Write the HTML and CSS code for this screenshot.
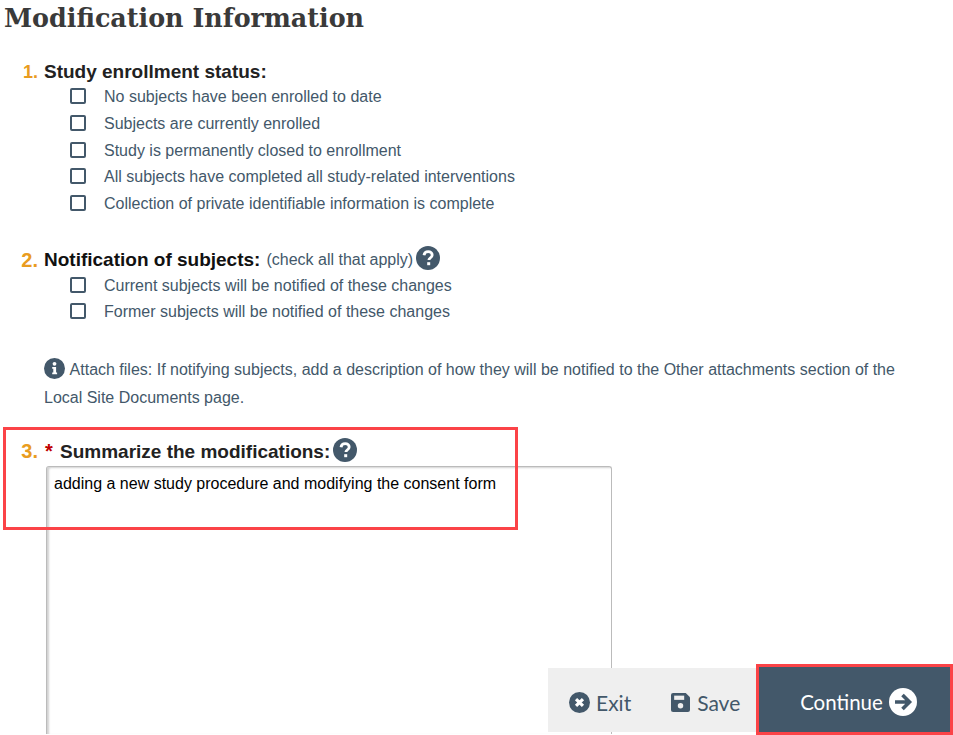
FILE: index.html
```html
<!DOCTYPE html>
<html>
<head>
    <title>Modification Information</title>
    <link rel="stylesheet" href="styles.css">
</head>
<body>
    <main class="page">
        <h1>Modification Information</h1>

        <section class="question q-status">
            <div class="question-title"><span class="num">1.</span><strong>Study enrollment status:</strong></div>
            <label class="option"><input type="checkbox"><span>No subjects have been enrolled to date</span></label>
            <label class="option"><input type="checkbox"><span>Subjects are currently enrolled</span></label>
            <label class="option"><input type="checkbox"><span>Study is permanently closed to enrollment</span></label>
            <label class="option"><input type="checkbox"><span>All subjects have completed all study-related interventions</span></label>
            <label class="option"><input type="checkbox"><span>Collection of private identifiable information is complete</span></label>
        </section>

        <section class="question q-notify">
            <div class="question-title">
                <span class="num">2.</span><strong>Notification of subjects:</strong>
                <span class="hint">(check all that apply)</span>
                <svg class="help-icon" viewBox="0 0 24 24"><circle cx="12" cy="12" r="12" fill="#43586a"/><path d="M8 9.200c.3-2.300 2-3.600 4.200-3.600 2.300 0 4 1.400 4 3.400 0 1.700-1 2.400-2.100 3.100-.9.6-1.200 1-1.200 2" fill="none" stroke="#fff" stroke-width="2.800"/><rect x="11.200" y="16.200" width="3" height="3" fill="#fff"/></svg>
            </div>
            <label class="option"><input type="checkbox"><span>Current subjects will be notified of these changes</span></label>
            <label class="option"><input type="checkbox"><span>Former subjects will be notified of these changes</span></label>
        </section>

        <p class="attach-note">
            <svg class="info-icon" viewBox="0 0 21 21"><circle cx="10.500" cy="10.500" r="10.500" fill="#43586a"/><circle cx="10.500" cy="5.800" r="1.900" fill="#fff"/><path d="M8.200 9h3.900v5.600h1v1.700H8.200v-1.700h1.100v-3.900H8.200z" fill="#fff"/></svg>
            Attach files: If notifying subjects, add a description of how they will be notified to the Other attachments section of the Local Site Documents page.
        </p>

        <section class="question q-summary">
            <div class="question-title">
                <span class="num">3.</span><span class="required">*</span><strong>Summarize the modifications:</strong>
                <svg class="help-icon" viewBox="0 0 24 24"><circle cx="12" cy="12" r="12" fill="#43586a"/><path d="M8 9.200c.3-2.300 2-3.600 4.200-3.600 2.300 0 4 1.400 4 3.400 0 1.700-1 2.400-2.100 3.100-.9.6-1.200 1-1.200 2" fill="none" stroke="#fff" stroke-width="2.800"/><rect x="11.200" y="16.200" width="3" height="3" fill="#fff"/></svg>
            </div>
            <textarea class="summary-box">adding a new study procedure and modifying the consent form</textarea>
        </section>
    </main>

    <div class="highlight highlight-summary"></div>

    <div class="action-bar">
        <button class="btn btn-plain">
            <svg class="btn-icon" viewBox="0 0 20 20"><circle cx="10" cy="10" r="10" fill="#43586a"/><path d="M6.700 6.700l6.600 6.600M13.300 6.700l-6.600 6.600" stroke="#fff" stroke-width="3"/></svg>
            Exit
        </button>
        <button class="btn btn-plain">
            <svg class="btn-icon btn-icon-save" viewBox="0 0 18 18"><path d="M2 0h12l4 4v12a2 2 0 0 1-2 2H2a2 2 0 0 1-2-2V2a2 2 0 0 1 2-2z" fill="#43586a"/><rect x="3" y="2.500" width="9.500" height="4" fill="#efefef"/><circle cx="9" cy="12" r="2.600" fill="#efefef"/></svg>
            Save
        </button>
        <button class="btn btn-continue">
            Continue
            <svg class="btn-icon-next" viewBox="0 0 28 28"><circle cx="14" cy="14" r="14" fill="#fff"/><path d="M6 14h14M13.500 7l7 7-7 7" fill="none" stroke="#43586a" stroke-width="3.600"/></svg>
        </button>
    </div>
</body>
</html>
```

FILE: styles.css
```css
html, body {
    margin: 0;
    height: 735px;
    overflow: hidden;
    background-color: #ffffff;
}
body {
    font-family: "Liberation Sans", Arial, sans-serif;
    font-size: 16px;
    color: #43586a;
}
.page {
    padding-left: 4px;
}
h1 {
    margin: 0;
    padding-top: 1px;
    font-family: "DejaVu Serif", serif;
    font-size: 25.4px;
    line-height: 35px;
    font-weight: bold;
    color: #3a3a3a;
}
.question-title {
    display: flex;
    align-items: center;
    height: 24px;
    color: #222222;
    font-size: 19px;
}
.num {
    width: 34px;
    margin-right: 6px;
    text-align: right;
    font-size: 20px;
    font-weight: bold;
    color: #e99c20;
}
.q-status {
    margin-top: 24px;
}
.q-status .num {
    font-size: 18px;
}
.q-notify {
    margin-top: 31px;
}
.q-notify strong {
    color: #111111;
}
.hint {
    margin-left: 6px;
    font-size: 16px;
    color: #43586a;
}
.help-icon {
    width: 24px;
    height: 24px;
    margin-left: 3px;
    margin-top: -4px;
}
.option {
    display: flex;
    align-items: center;
    height: 26.7px;
    padding-left: 66px;
}
.option input {
    appearance: none;
    width: 16px;
    height: 16px;
    margin: -2px 18px 0 0;
    background-color: #ffffff;
    border: 2px solid #43586a;
    border-radius: 2px;
    box-sizing: border-box;
}
.attach-note {
    margin: 30px 40px 0 40px;
    line-height: 28px;
}
.info-icon {
    width: 21px;
    height: 21px;
    margin-right: 1px;
    vertical-align: -4px;
}
.q-summary {
    margin-top: 28px;
}
.required {
    width: 15px;
    margin-left: 1px;
    font-size: 20px;
    font-weight: bold;
    color: #c00000;
}
.summary-box {
    display: block;
    width: 566px;
    height: 268px;
    margin: 2px 0 0 42px;
    padding: 8px 7px;
    box-sizing: border-box;
    font-family: "Liberation Sans", Arial, sans-serif;
    font-size: 16px;
    color: #000000;
    border: 1px solid #bbbbbb;
    border-bottom: none;
    border-radius: 3px 3px 0 0;
    box-shadow: inset 2px 1px 2px rgba(0, 0, 0, 0.18);
    resize: none;
    outline: none;
}
.highlight {
    position: absolute;
    box-sizing: border-box;
    border: 3px solid #fb4347;
}
.highlight-summary {
    left: 3px;
    top: 427px;
    width: 515px;
    height: 103px;
}
.action-bar {
    position: absolute;
    left: 548px;
    top: 668px;
    width: 402px;
    height: 64px;
    display: flex;
    align-items: center;
    background-color: #efefef;
    font-family: Lato, sans-serif;
    font-size: 21px;
}
.btn {
    display: flex;
    align-items: center;
    box-sizing: border-box;
    height: 100%;
    border: none;
    background: none;
    font: inherit;
    color: #43586a;
    padding: 4px 0 0 0;
}
.btn-plain:first-child {
    margin-left: 21px;
}
.btn-plain:nth-child(2) {
    margin-left: 40px;
}
.btn-icon {
    width: 21px;
    height: 21px;
    margin-right: 6px;
}
.btn-icon-save {
    width: 19px;
    height: 19px;
    margin-right: 7px;
}
.btn-continue {
    position: absolute;
    left: 208px;
    top: -4px;
    box-sizing: border-box;
    width: 197px;
    height: 71px;
    justify-content: center;
    gap: 6px;
    padding: 4px 0 0 8px;
    font-size: 20.5px;
    color: #ffffff;
    background-color: #43586a;
    border: 3px solid #fb4347;
}
.btn-icon-next {
    width: 28px;
    height: 28px;
}
```
